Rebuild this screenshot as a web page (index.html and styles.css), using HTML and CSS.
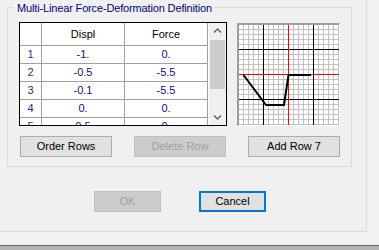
FILE: index.html
```html
<!DOCTYPE html>
<html>
  <head>
    <meta charset="utf-8">
    <link rel="stylesheet" href="styles.css">
  </head>
  <body>
    <div class="dialog">
      <fieldset class="group">
        <legend>Multi-Linear Force-Deformation Definition</legend>
        <div class="editor">
          <div class="sheet">
            <div class="cells">
              <div class="head"></div><div class="head">Displ</div><div class="head">Force</div>
              <div class="num">1</div><div class="val">-1.</div><div class="val">0.</div>
              <div class="num">2</div><div class="val">-0.5</div><div class="val">-5.5</div>
              <div class="num">3</div><div class="val">-0.1</div><div class="val">-5.5</div>
              <div class="num">4</div><div class="val">0.</div><div class="val">0.</div>
              <div class="num">5</div><div class="val">0.5</div><div class="val">0.</div>
            </div>
            <div class="vscroll">
              <div class="arrow">
                <svg width="17" height="17" viewBox="0 0 17 17"><path d="M5 9.5L8.5 6L12 9.5" fill="none" stroke="#606060" stroke-width="1.4"/></svg>
              </div>
              <div class="thumb"></div>
              <div class="track"></div>
              <div class="arrow">
                <svg width="17" height="17" viewBox="0 0 17 17"><path d="M5 7.5L8.5 11L12 7.5" fill="none" stroke="#606060" stroke-width="1.4"/></svg>
              </div>
            </div>
          </div>
          <div class="plot">
            <svg width="100" height="100" viewBox="0 0 100 100">
              <defs>
                <pattern id="minor" width="5" height="5" patternUnits="userSpaceOnUse">
                  <path d="M4.5 0V5M0 4.5H5" stroke="#c0c0c0" stroke-width="1" fill="none"/>
                </pattern>
              </defs>
              <rect width="100" height="100" fill="#fff"/>
              <rect width="100" height="100" fill="url(#minor)"/>
              <path d="M24.5 0V100M74.5 0V100M0 24.5H100M0 74.5H100" stroke="#000" stroke-width="1"/>
              <path d="M49.5 0V100M0 49.5H100" stroke="#ff0000" stroke-width="1"/>
              <polyline points="4.5,50 27,80 45,80 49.5,50 72,50" fill="none" stroke="#000" stroke-width="2" stroke-linejoin="round"/>
            </svg>
          </div>
        </div>
        <div class="row-buttons">
          <button>Order Rows</button>
          <button disabled>Delete Row</button>
          <button>Add Row 7</button>
        </div>
      </fieldset>
      <div class="footer">
        <button class="small" disabled>OK</button>
        <button class="small default">Cancel</button>
      </div>
    </div>
    <div class="below"></div>
  </body>
</html>
```

FILE: styles.css
```css
* {
    box-sizing: border-box;
}
body {
    margin: 0;
    height: 250px;
    overflow: hidden;
    background: #f2f2f2;
    font-family: "Liberation Sans", Arial, sans-serif;
    font-size: 11px;
    color: #000;
}

.dialog {
    width: 367px;
    height: 232px;
    background: #f0f0f0;
    border-right: 1px solid #dadada;
    border-bottom: 1px solid #dadada;
}

.group {
    margin: 0 0 0 7px;
    width: 345px;
    min-width: 0;
    border: 1px solid #dcdcdc;
    padding: 8px 11px 9px 11px;
}
.group legend {
    margin-left: -5px;
    padding: 2px 2px 0 3px;
    line-height: 12px;
    color: #000080;
    letter-spacing: -0.15px;
}

.editor {
    display: flex;
    gap: 10px;
    align-items: flex-start;
}

.sheet {
    display: flex;
    width: 208px;
    height: 104px;
    border: 1px solid #000;
    background: #fff;
}
.cells {
    display: grid;
    grid-template-columns: 21px 82px 82px;
    grid-template-rows: 22px;
    grid-auto-rows: 17px;
    gap: 1px;
    padding-right: 1px;
    width: 188px;
    height: 102px;
    overflow: hidden;
    background: #a0a0a0;
}
.cells div {
    background: #fff;
    text-align: center;
    line-height: 17px;
    white-space: nowrap;
}
.cells .head { line-height: 22px; color: #000; }
.cells .num { color: #2a2a9a; }
.cells .val { color: #101080; }

.vscroll {
    display: flex;
    flex-direction: column;
    width: 17px;
    margin-left: 1px;
    background: #f0f0f0;
}
.vscroll .arrow { height: 17px; }
.vscroll .arrow svg { display: block; }
.vscroll .thumb {
    height: 49px;
    margin: 0 1px;
    background: #cdcdcd;
}
.vscroll .track { flex: 1; }

.plot {
    margin-top: 1px;
    width: 103px;
    height: 103px;
    border-left: 2px solid #9d9d9d;
    border-top: 2px solid #9d9d9d;
    border-right: 1px solid #fff;
    border-bottom: 1px solid #fff;
}
.plot svg { display: block; }

.row-buttons {
    display: flex;
    gap: 22px;
    margin-top: 10px;
    padding-left: 1px;
}

button {
    width: 92px;
    height: 21px;
    margin: 0;
    padding: 0;
    font-family: inherit;
    font-size: 11px;
    line-height: 19px;
    color: #000;
    background: #e1e1e1;
    border: 1px solid #adadad;
    border-radius: 0;
}
button:disabled {
    color: #a0a0a0;
    background: #cccccc;
    border-color: #bfbfbf;
}

.footer {
    display: flex;
    gap: 38px;
    margin-top: 24px;
    padding-left: 94px;
}
button.small { width: 67px; }
button.default {
    border: 2px solid #0078d7;
    line-height: 17px;
}

.below {
    margin-top: 13px;
    height: 5px;
    border-top: 1px solid #6a6a6a;
    background: #b4b4b4;
}
```
